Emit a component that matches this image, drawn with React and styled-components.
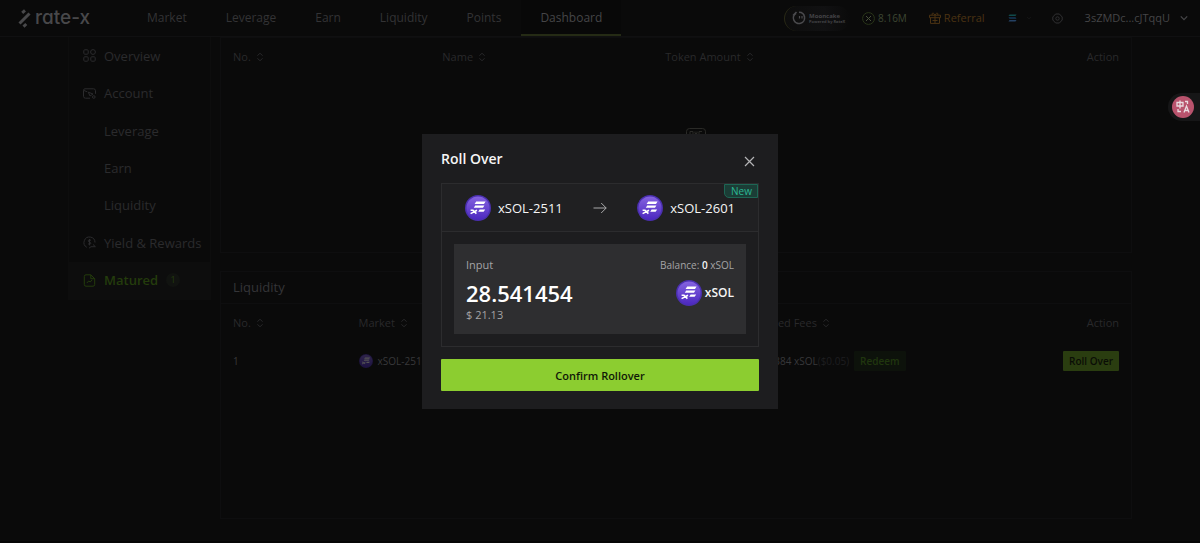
import React from 'react';
import styled, { createGlobalStyle, css } from 'styled-components';

const GlobalStyle = createGlobalStyle`
  * {
    box-sizing: border-box;
  }

  body {
    margin: 0;
    background: #0a0a0a;
    color: #37373a;
    font-family: 'Open Sans', 'Noto Sans', sans-serif;
    font-size: 12px;
    line-height: 16px;
  }

  a {
    color: inherit;
    text-decoration: none;
  }

  button {
    font-family: inherit;
    cursor: pointer;
  }
`;

const Page = styled.div`
  min-height: 100vh;
  display: flex;
  flex-direction: column;
  border-bottom: 2px solid #050505;
`;

/* header */

const Header = styled.header`
  display: flex;
  align-items: center;
  height: 37px;
  padding: 0 12px 0 18px;
  border-bottom: 1px solid #101011;
`;

const Logo = styled.a`
  display: flex;
  align-items: center;
  gap: 4px;
  width: 110px;
  color: #48484a;
  font-family: Inter, sans-serif;
  font-feature-settings: 'cv11';
  font-size: 19px;
  font-weight: 500;
  line-height: 20px;
`;

const Nav = styled.nav`
  display: flex;
  gap: 1px;
  align-self: stretch;
  flex: 1;
`;

const NavLink = styled.a`
  display: flex;
  align-items: center;
  height: 36px;
  padding: 2px 19px 0;
  border-bottom: 2px solid transparent;
  color: #333335;

  ${props =>
    props.$active &&
    css`
      color: #454547;
      background: #080808;
      border-bottom-color: #252b15;
    `}
`;

const HeaderTools = styled.div`
  display: flex;
  align-items: center;
`;

const Sponsor = styled.a`
  display: flex;
  align-items: center;
  gap: 3px;
  width: 66px;
  height: 25px;
  padding-left: 7px;
  border-radius: 13px;
  border-left: 1px solid #2a2a17;
  background: linear-gradient(90deg, #0d0d0d, #111112 60%, #0a0a0a);
  color: #444447;
  font-size: 6px;
  font-weight: 700;
  line-height: 7px;

  small {
    display: block;
    font-size: 4px;
    line-height: 4px;
  }
`;

const Tool = styled.a`
  display: flex;
  align-items: center;
  gap: 3px;
  margin-left: ${props => props.$space}px;
  color: ${props => props.$color};
  font-size: ${props => props.$size || 11}px;
`;

const ToolButton = styled.button`
  display: flex;
  align-items: center;
  gap: 10px;
  margin-left: ${props => props.$space}px;
  padding: 0;
  border: 0;
  background: none;
  color: #454547;
  font-size: 11px;
  line-height: 16px;
`;

/* page body */

const Body = styled.div`
  display: flex;
  align-items: flex-start;
  gap: 9px;
  padding: 0 68px;
`;

const Sidebar = styled.aside`
  flex: 0 0 143px;
  display: grid;
  grid-auto-rows: 1fr;
  min-height: 263px;
  border: 1px solid #0d0d0d;
  border-top: 0;
`;

const SideLink = styled.a`
  display: flex;
  align-items: center;
  gap: 8px;
  padding-left: ${props => (props.$nested ? 35 : 14)}px;
  font-size: 13px;
  color: #2b2b2d;

  ${props =>
    props.$active &&
    css`
      color: #243c0c;
      background: #0d0d0d;
      font-weight: 600;
    `}
`;

const Count = styled.span`
  width: 14px;
  height: 14px;
  border-radius: 50%;
  background: #111310;
  font-size: 9px;
  font-weight: 400;
  line-height: 14px;
  text-align: center;
`;

const Main = styled.main`
  flex: 1;
  min-width: 0;
  display: flex;
  flex-direction: column;
  gap: 18px;
`;

const Panel = styled.section`
  min-height: ${props => props.$min}px;
  border: 1px solid #0e0e0f;
`;

const PanelTitle = styled.h2`
  margin: 0;
  padding: 7px 12px;
  border-bottom: 1px solid #0e0e0f;
  color: #353538;
  font-size: 13px;
  font-weight: 400;
  line-height: 17px;
`;

const Table = styled.table`
  width: 100%;
  table-layout: fixed;
  border-collapse: collapse;

  th,
  td {
    height: 38px;
    padding: 0 12px;
    text-align: left;
    font-weight: 400;
  }

  th {
    color: #29292b;
    font-size: 11px;
  }

  td {
    color: #38383a;
    font-size: 10px;
  }

  th:last-child,
  td:last-child {
    text-align: right;
  }
`;

const Cell = styled.div`
  display: flex;
  align-items: center;
  gap: 5px;
  white-space: nowrap;
`;

const Dim = styled.span`
  color: #1e1e20;
`;

const Empty = styled.div`
  display: flex;
  justify-content: center;
  padding: 52px 0 0 40px;
`;

const SmallButton = styled.button`
  height: 20px;
  padding: 0 6px;
  border: 0;
  border-radius: 1px;
  background: ${props => (props.$solid ? '#2a3d10' : '#0d120b')};
  color: ${props => (props.$solid ? '#0a0d06' : '#20360e')};
  font-size: 10px;
  font-weight: 600;
`;

/* dialog */

const Overlay = styled.div`
  position: fixed;
  inset: 0;
  display: flex;
  align-items: center;
  justify-content: center;
`;

const Dialog = styled.div`
  width: 356px;
  padding: 15px 19px 18px;
  background: #1d1d1f;
  color: #f5f5f5;
`;

const DialogHead = styled.div`
  display: flex;
  align-items: flex-start;
  justify-content: space-between;
  margin-bottom: 15px;

  h1 {
    margin: 0;
    font-size: 14px;
    font-weight: 600;
    line-height: 19px;
  }
`;

const CloseButton = styled.button`
  display: flex;
  padding: 7px 4px 0;
  border: 0;
  background: none;
  color: #b4b4b6;
`;

const Box = styled.div`
  border: 1px solid #2c2c2e;
`;

const Route = styled.div`
  position: relative;
  display: flex;
  align-items: center;
  justify-content: space-between;
  height: 48px;
  padding: 0 23px;
  background: #202022;
  border-bottom: 1px solid #2c2c2e;
`;

const Token = styled.div`
  display: flex;
  align-items: center;
  gap: 7px;
  font-size: 13px;
`;

const InputToken = styled(Token)`
  gap: 3px;
  color: #f5f5f5;
  font-size: 12px;
  font-weight: 600;
`;

const NewTag = styled.span`
  position: absolute;
  top: 0;
  right: 0;
  padding: 0 5px 0 6px;
  border: 1px solid #1d6654;
  border-bottom-left-radius: 5px;
  background: #1b3d36;
  color: #2bb795;
  font-size: 10px;
  line-height: 12px;
`;

const InputCard = styled.div`
  display: flex;
  flex-direction: column;
  margin: 12px;
  padding: 13px 12px 11px;
  background: #2e2e30;
  color: #a4a4a6;
  font-size: 11px;
`;

const Line = styled.div`
  display: flex;
  align-items: center;
  justify-content: space-between;
`;

const AmountLine = styled(Line)`
  margin-top: 6px;
`;

const Balance = styled.span`
  font-size: 10px;

  b {
    color: #f5f5f5;
    font-weight: 600;
  }
`;

const Amount = styled.div`
  color: #fff;
  font-size: 22px;
  font-weight: 600;
  line-height: 28px;
`;

const ConfirmButton = styled.button`
  display: block;
  width: 100%;
  height: 32px;
  margin-top: 12px;
  border: 0;
  border-radius: 1px;
  background: #8ccd30;
  color: #101807;
  font-size: 11px;
  font-weight: 600;
`;

const Translate = styled.button`
  position: fixed;
  top: 93px;
  right: 0;
  width: 32px;
  height: 28px;
  padding: 0 0 0 4px;
  border: 0;
  border-radius: 14px 0 0 14px;
  background: #161617;
  display: flex;
  align-items: center;
`;

/* icons */

const TokenIcon = ({ size = 26, dim }) => (
  <svg width={size} height={size} viewBox="0 0 26 26" opacity={dim ? 0.3 : 1}>
    <defs>
      <linearGradient id="token" x1="0" y1="0" x2="0" y2="1">
        <stop offset="0" stopColor="#8563e0" />
        <stop offset="1" stopColor="#4c28c0" />
      </linearGradient>
    </defs>
    <circle cx="13" cy="13" r="13" fill="#4a2fb0" />
    <circle cx="13" cy="13" r="11.5" fill="url(#token)" />
    <path
      d="M11.2 6.6h9.4l-1.6 2.3H9.6zM10.2 10.4h9.2l-1.4 2.3H8.8zM14.6 14.4h5.6l-1.6 2.3h-5.4z"
      fill="#fff"
    />
    <path d="M5.6 15.2h2.4l3.4 3.4M12 15.2l-6.4 3.4" fill="none" stroke="#fff" strokeWidth="1.6" />
  </svg>
);

const SortIcon = () => (
  <svg width="8" height="10" viewBox="0 0 8 10" fill="none" stroke="currentColor">
    <path d="M1.5 3.7 4 1.2l2.5 2.5M1.5 6.3 4 8.8l2.5-2.5" />
  </svg>
);

const LogoMark = () => (
  <svg width="13" height="19" viewBox="0 0 13 19" fill="none" stroke="currentColor" strokeWidth="3">
    <path d="M1.5 14.5 11.5 4.5M4.2 3.8 7 1.4M5.5 17.6 8.3 15" />
  </svg>
);

const OverviewIcon = () => (
  <svg width="13" height="13" viewBox="0 0 13 13" fill="none" stroke="currentColor">
    <rect x=".8" y=".8" width="4.4" height="4.4" rx="1" />
    <circle cx="10" cy="3" r="2.4" />
    <rect x=".8" y="7.8" width="4.4" height="4.4" rx="1" />
    <rect x="7.8" y="7.8" width="4.4" height="4.4" rx="1" />
  </svg>
);

const AccountIcon = () => (
  <svg width="13" height="13" viewBox="0 0 13 13" fill="none" stroke="currentColor">
    <path d="M7 11.2H2.5a2 2 0 0 1-2-2V3.3A1.5 1.5 0 0 1 2 1.8h8.5a2 2 0 0 1 2 2v3M.7 3.4l3.6 1.4" />
    <path d="M5.3 5.2 10 7 7 9z" />
    <circle cx="10.8" cy="10" r="1.3" />
  </svg>
);

const RewardIcon = () => (
  <svg width="13" height="13" viewBox="0 0 13 13" fill="none" stroke="currentColor">
    <path d="M3.8 11.3A5.5 5.5 0 1 1 12 6.5M8 4.4C6.7 3.4 5 4 5.2 5.1c.2 1.3 2.7.8 2.6 2.2C7.7 8.5 6 8.6 5 7.7M6.5 3v6.4" />
    <path d="m6 12.2 2-1.5h4.5M10 8.5l2.3 2.1" />
  </svg>
);

const MaturedIcon = () => (
  <svg width="13" height="13" viewBox="0 0 13 13" fill="none" stroke="currentColor">
    <path d="M7.8.8H3A1.7 1.7 0 0 0 1.3 2.5v8A1.7 1.7 0 0 0 3 12.2h7a1.7 1.7 0 0 0 1.7-1.7V4.7zM7.8.8v3.9h3.9" />
    <path d="m3.8 9 1.9-2 1.5 1 2-2.2" />
  </svg>
);

const CoinIcon = () => (
  <svg width="13" height="13" viewBox="0 0 13 13" fill="none" stroke="#293519">
    <circle cx="6.5" cy="6.5" r="5.9" />
    <path d="m4 4 5 5M9 4 4 9" stroke="#47503a" />
  </svg>
);

const GiftIcon = () => (
  <svg width="12" height="12" viewBox="0 0 12 12" fill="none" stroke="currentColor">
    <path d="M.5 3.2h11v2.5H.5zM1.5 5.7v5.7h9V5.7M6 3.2v8.2M3.5 8.5h5" />
    <path d="M6 3C4.5.3 2.5.7 3.2 3M6 3C7.5.3 9.5.7 8.8 3" />
  </svg>
);

const SolanaIcon = () => (
  <svg width="9" height="8" viewBox="0 0 9 8">
    <path d="M1.5.5h7l-1 1.5h-7z" fill="#104a4a" />
    <path d="M.5 3.2h7l1 1.5h-7z" fill="#14385a" />
    <path d="M1.5 6h7l-1 1.5h-7z" fill="#244062" />
  </svg>
);

const SettingsIcon = () => (
  <svg width="11" height="11" viewBox="0 0 11 11" fill="none" stroke="#303032">
    <path d="M3.6 1h3.8l2.8 3v3l-2.8 3H3.6L.8 7V4z" />
    <circle cx="5.5" cy="5.5" r="1.7" />
  </svg>
);

const ChevronIcon = ({ size = 8, color = 'currentColor' }) => (
  <svg width={size} height={size} viewBox="0 0 8 8" fill="none" stroke={color} strokeWidth="1.3">
    <path d="m.8 2.4 3.2 3.2 3.2-3.2" />
  </svg>
);

const MooncakeIcon = () => (
  <svg width="14" height="14" viewBox="0 0 14 14" fill="none" stroke="#4a4a4d" strokeWidth="1.6">
    <path d="M4 2.2A5.6 5.6 0 1 0 12.5 6M7 1.2A5.6 5.6 0 0 1 12.500 6M1 4.5 4.5 1" />
    <path d="M7.5 5v2.5M10 5v2.5" strokeWidth="1.2" />
  </svg>
);

const EmptyIcon = () => (
  <svg width="20" height="24" viewBox="0 0 20 24" fill="none" stroke="#2a2a27">
    <rect x=".5" y=".5" width="19" height="23" rx="3" />
    <path d="M4 6V3.5h3V6M9 3.5v2h2v-2M13 6V3.5h3" />
  </svg>
);

const ArrowIcon = () => (
  <svg width="14" height="12" viewBox="0 0 14 12" fill="none" stroke="#a8a8aa">
    <path d="M.5 6h12.7M8.2 1l5 5-5 5" />
  </svg>
);

const CloseIcon = () => (
  <svg width="11" height="11" viewBox="0 0 11 11" fill="none" stroke="currentColor" strokeWidth="1.2">
    <path d="m1 1 9 9M10 1l-9 9" />
  </svg>
);

const TranslateIcon = () => (
  <svg width="22" height="22" viewBox="0 0 22 22" fill="none" stroke="#eadbe0" strokeWidth="1.3">
    <circle cx="11" cy="11" r="11" fill="#b9536d" stroke="none" />
    <path d="M5 6.5h6V10H5zM8 4.5v8M13 5.500h2.500V8M6 13v2.500h3M12 16.500l2.500-6.500 2.500 6.500M13 14.500h3" />
  </svg>
);

const navItems = ['Market', 'Leverage', 'Earn', 'Liquidity', 'Points', 'Dashboard'];

const sideItems = [
  { label: 'Overview', icon: <OverviewIcon /> },
  { label: 'Account', icon: <AccountIcon /> },
  { label: 'Leverage' },
  { label: 'Earn' },
  { label: 'Liquidity' },
  { label: 'Yield & Rewards', icon: <RewardIcon /> },
  { label: 'Matured', icon: <MaturedIcon />, count: 1 },
];

const SortHeader = ({ children }) => (
  <th>
    <Cell>
      {children} <SortIcon />
    </Cell>
  </th>
);

const TopBar = () => (
  <Header>
    <Logo href="#home">
      <LogoMark />
      rate-x
    </Logo>
    <Nav>
      {navItems.map(item => (
        <NavLink key={item} href={`#${item}`} $active={item === 'Dashboard'}>
          {item}
        </NavLink>
      ))}
    </Nav>
    <HeaderTools>
      <Sponsor href="#mooncake">
        <MooncakeIcon />
        <span>
          Mooncake
          <small>Powered by RateX</small>
        </span>
      </Sponsor>
      <Tool href="#points" $space={12} $color="#3d4632" $size={10}>
        <CoinIcon />
        8.16M
      </Tool>
      <Tool href="#referral" $space={22} $color="#4a3212">
        <GiftIcon />
        Referral
      </Tool>
      <ToolButton $space={23} aria-label="Network">
        <SolanaIcon />
        <ChevronIcon size={4} color="#222224" />
      </ToolButton>
      <ToolButton $space={21} aria-label="Settings">
        <SettingsIcon />
      </ToolButton>
      <ToolButton $space={22}>
        3sZMDc...cJTqqU
        <ChevronIcon />
      </ToolButton>
    </HeaderTools>
  </Header>
);

const RollOverDialog = () => (
  <Overlay>
    <Dialog role="dialog" aria-labelledby="dialog-title">
      <DialogHead>
        <h1 id="dialog-title">Roll Over</h1>
        <CloseButton aria-label="Close">
          <CloseIcon />
        </CloseButton>
      </DialogHead>
      <Box>
        <Route>
          <Token>
            <TokenIcon />
            xSOL-2511
          </Token>
          <ArrowIcon />
          <Token>
            <TokenIcon />
            xSOL-2601
          </Token>
          <NewTag>New</NewTag>
        </Route>
        <InputCard>
          <Line>
            <span>Input</span>
            <Balance>
              Balance: <b>0</b> xSOL
            </Balance>
          </Line>
          <AmountLine>
            <Amount>28.541454</Amount>
            <InputToken>
              <TokenIcon />
              xSOL
            </InputToken>
          </AmountLine>
          <span>$ 21.13</span>
        </InputCard>
      </Box>
      <ConfirmButton>Confirm Rollover</ConfirmButton>
    </Dialog>
  </Overlay>
);

export default function App() {
  return (
    <>
      <GlobalStyle />
      <Page>
        <TopBar />
        <Body>
          <Sidebar>
            {sideItems.map(({ label, icon, count }) => (
              <SideLink key={label} href="#dashboard" $nested={!icon} $active={!!count}>
                {icon}
                {label}
                {count && <Count>{count}</Count>}
              </SideLink>
            ))}
          </Sidebar>
          <Main>
            <Panel $min={216}>
              <Table>
                <colgroup>
                  <col width="23%" />
                  <col width="24.5%" />
                  <col />
                  <col width="20%" />
                </colgroup>
                <thead>
                  <tr>
                    <SortHeader>No.</SortHeader>
                    <SortHeader>Name</SortHeader>
                    <SortHeader>Token Amount</SortHeader>
                    <th>Action</th>
                  </tr>
                </thead>
              </Table>
              <Empty>
                <EmptyIcon />
              </Empty>
            </Panel>
            <Panel $min={248}>
              <PanelTitle>Liquidity</PanelTitle>
              <Table>
                <colgroup>
                  <col width="13.8%" />
                  <col />
                  <col width="22.7%" />
                  <col width="20%" />
                </colgroup>
                <thead>
                  <tr>
                    <SortHeader>No.</SortHeader>
                    <SortHeader>Market</SortHeader>
                    <SortHeader>Earned Fees</SortHeader>
                    <th>Action</th>
                  </tr>
                </thead>
                <tbody>
                  <tr>
                    <td>1</td>
                    <td>
                      <Cell>
                        <TokenIcon size={14} dim /> xSOL-2511
                      </Cell>
                    </td>
                    <td>
                      <Cell>
                        <span>
                          0.00384 xSOL<Dim>($0.05)</Dim>
                        </span>
                        <SmallButton>Redeem</SmallButton>
                      </Cell>
                    </td>
                    <td>
                      <SmallButton $solid>Roll Over</SmallButton>
                    </td>
                  </tr>
                </tbody>
              </Table>
            </Panel>
          </Main>
        </Body>
      </Page>
      <RollOverDialog />
      <Translate aria-label="Translate">
        <TranslateIcon />
      </Translate>
    </>
  );
}
